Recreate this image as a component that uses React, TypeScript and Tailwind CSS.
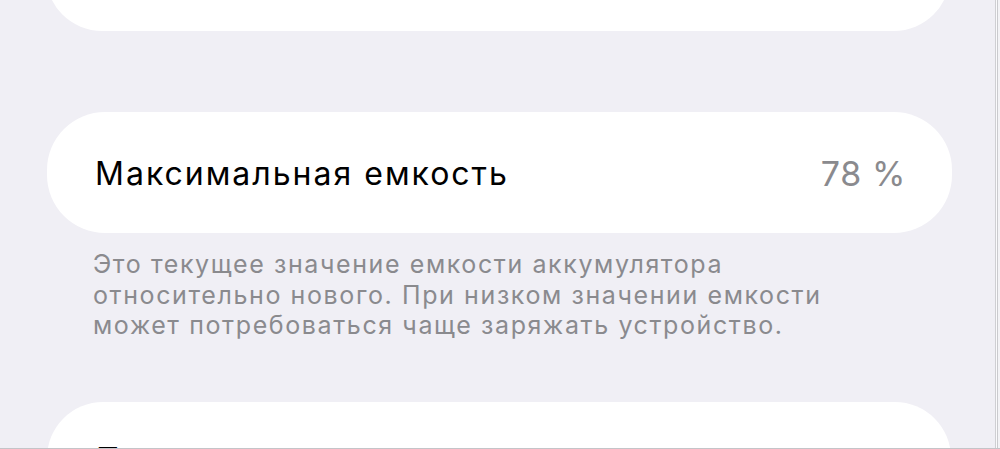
export default function App() {
  const font = { fontFamily: 'Inter, "Noto Sans", sans-serif' };
  return (
    <div className="w-[1000px] h-[449px] overflow-hidden bg-[#f0eff5] flex flex-col" style={font}>
      <div className="h-[448px] flex shrink-0">
        <div className="w-[995px] h-[448px] overflow-hidden flex flex-col">
          {/* previous group, scrolled mostly out of view */}
          <div className="mt-[-89px] ml-[46px] mr-[45px] h-[120px] shrink-0 rounded-[56px] bg-white" />

          {/* maximum capacity row */}
          <div className="mt-[81px] ml-[47px] mr-[43px] h-[121px] shrink-0 rounded-[58px] bg-white flex items-center justify-between pt-[3px] pl-[48px] pr-[46px]">
            <span className="text-[32px] leading-none text-black tracking-[2px]">Максимальная емкость</span>
            <span className="text-[34px] leading-none text-[#8a8a8e] tracking-[0.6px]">78 %</span>
          </div>

          <p className="mt-[16px] ml-[93px] mr-[40px] text-[25px] leading-[30.5px] text-[#8a8a8e] tracking-[1.6px] whitespace-nowrap">
            Это текущее значение емкости аккумулятора
            <br />
            относительно нового. При низком значении емкости
            <br />
            может потребоваться чаще заряжать устройство.
          </p>

          {/* next group */}
          <div className="mt-[61px] ml-[47px] mr-[44px] h-[200px] shrink-0 rounded-[56px] bg-white pt-[42px] pl-[49px]">
            <span className="text-[32px] leading-none text-black tracking-[2px]">Пиковая производительность</span>
          </div>
        </div>
        <div className="w-px h-[448px] bg-[#cfcfd3]" />
        <div className="w-px h-[448px] bg-[#fafafc]" />
        <div className="w-px h-[448px] bg-[#cacace]" />
        <div className="w-[2px] h-[448px] bg-[#f3f3f6]" />
      </div>
      <div className="h-px w-full bg-[#c4c4c8]" />
    </div>
  );
}
